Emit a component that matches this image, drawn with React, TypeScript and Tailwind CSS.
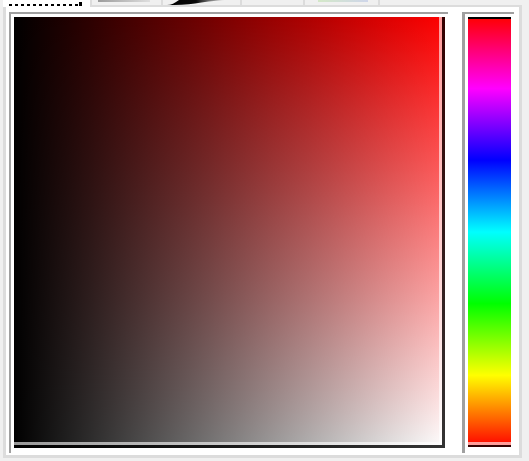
import React from 'react';

// Tabs along the top edge: only their bottom sliver is in view.
function TabStrip() {
  return (
    <div className="flex h-[5px] pl-[3px]">
      {/* selected tab, white, runs down into the panel */}
      <div className="relative z-10 flex h-[7px] w-[87px] items-end bg-white pb-[1px] pl-[6px]">
        <div className="h-[2px] w-[70px] bg-[repeating-linear-gradient(to_right,#000_0,#000_3px,transparent_3px,transparent_6px)]" />
        <div className="h-[4px] w-[3px] bg-black" />
      </div>
      <div className="h-[5px] w-[2px] bg-[#dcdcdc]" />
      <div className="h-[5px] w-[69px] bg-[#f0f0f0] pl-[6px]">
        <div className="h-[2px] w-[52px] bg-[linear-gradient(to_right,#9c9c9c,#dedede)]" />
      </div>
      <div className="h-[5px] w-[2px] bg-[#dcdcdc]" />
      <div className="h-[5px] w-[77px] bg-[#f0f0f0] pl-[4px]">
        <svg width="60" height="5" viewBox="0 0 60 5">
          <defs>
            <linearGradient id="sw" x1="0" x2="1" y1="0" y2="0">
              <stop offset="0" stopColor="#000" />
              <stop offset="0.5" stopColor="#0a0a0a" />
              <stop offset="1" stopColor="#e6e6e6" />
            </linearGradient>
          </defs>
          <path d="M0 5 C4 5 8 3 12 0 L58 0 C46 1 36 2 28 3.5 C20 5 10 5 0 5 Z" fill="url(#sw)" />
        </svg>
      </div>
      <div className="h-[5px] w-[2px] bg-[#dcdcdc]" />
      <div className="h-[5px] w-[61px] bg-[#f0f0f0]" />
      <div className="h-[5px] w-[2px] bg-[#dcdcdc]" />
      <div className="h-[5px] w-[73px] bg-[#f0f0f0] pl-[13px]">
        <div className="h-[2px] w-[50px] bg-[linear-gradient(to_right,#d4e8c8,#cfd6ea)]" />
      </div>
      <div className="h-[5px] w-[2px] bg-[#dcdcdc]" />
      <div className="h-[5px] flex-1 bg-[#f0f0f0]" />
    </div>
  );
}

// Saturation / value square for the current hue (red)
function ColorField() {
  return (
    <div className="h-[441px] w-[439px] border-l-2 border-t-2 border-[#a0a0a0] pl-[3px] pt-[3px]">
      <div className="h-[431px] w-[431px] border-b-[3px] border-r-[3px] border-black/80 bg-origin-border bg-[linear-gradient(to_right,#000,rgba(0,0,0,0)),linear-gradient(to_bottom,#f00,#fff)]">
        <div className="h-full w-full border-b-[3px] border-r-[3px] border-white/60" />
      </div>
    </div>
  );
}

function HueStrip() {
  return (
    <div className="h-[441px] w-[52px] border-l-[3px] border-t-2 border-[#a0a0a0] pl-[3px] pt-[3px]">
      <div className="flex h-[430px] w-[43px] flex-col border-b-2 border-t-2 border-b-black/80 border-t-black bg-origin-border bg-[linear-gradient(to_bottom,#f00,#f0f,#00f,#0ff,#0f0,#ff0,#f00)]">
        <div className="flex-1 border-b-[3px] border-white/60" />
      </div>
    </div>
  );
}

export default function App() {
  return (
    <div className="h-[461px] w-[529px] overflow-hidden bg-[#f0f0f0]">
      <TabStrip />
      <div className="ml-[3px] h-[453px] w-[519px] border-b-[3px] border-l-[3px] border-r-[3px] border-t-2 border-[#dcdcdc] bg-white">
        <div className="flex gap-[14px] pl-[3px] pt-[5px]">
          <ColorField />
          <HueStrip />
        </div>
      </div>
    </div>
  );
}
